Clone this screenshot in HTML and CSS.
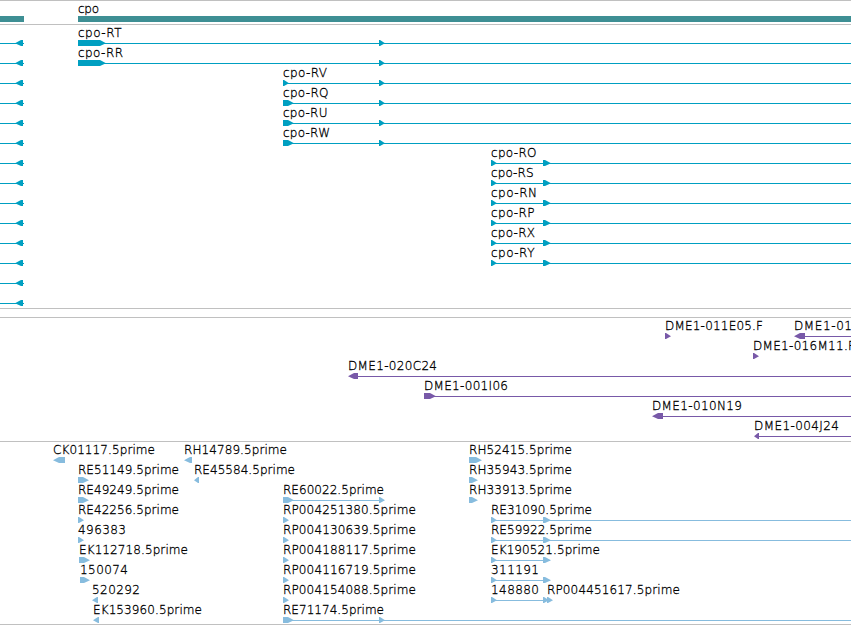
FILE: index.html
```
<!DOCTYPE html>
<html lang="en">
<head>
    <meta charset="UTF-8">
    <meta name="viewport" content="width=device-width, initial-scale=1.0">
    <title>cpo - gene tracks</title>
    <link rel="stylesheet" href="styles.css">
</head>
<body>
    <main class="browser">
        <section class="track gene" id="gene"></section>
        <section class="track transcript" id="transcript"></section>
        <section class="track empty"></section>
        <section class="track clone" id="clone"></section>
        <section class="track est" id="est"></section>
    </main>
    <script src="tracks.js"></script>
</body>
</html>
```
FILE: styles.css
```
body {
    margin: 0;
    background-color: #ffffff;
    overflow: hidden;
}

.browser {
    display: flex;
    flex-direction: column;
    width: 851px;
}

.track {
    border-top: 1px solid #c0c0c0;
    padding: 1px 0 2px;
}

.track.empty {
    height: 8px;
    padding: 0;
}

.track.est {
    padding-bottom: 1px;
    border-bottom: 1px solid #c0c0c0;
}

.row {
    display: block;
    width: 851px;
    height: 20px;
    fill: currentColor;
}

.label {
    font-family: "DejaVu Sans Light", "DejaVu Sans", sans-serif;
    font-weight: 200;
    font-size: 12px;
    fill: #000000;
    stroke: #000000;
    stroke-width: 0.3px;
}

.gene {
    color: #3e8f94;
}

.transcript {
    color: #009fc1;
}

.clone {
    color: #7859a8;
}

.est {
    color: #87bcde;
}
```
FILE: tracks.js
```
const END = 851;

// labels: [x, text, width]
// lines:  [from, to]
// exons:  [from, to, direction], direction is 1, -1 or 0 for a plain bar
const left = { lines: [[0, 24]], exons: [[15, 23, -1]] };

function transcript(x, name, width, exons) {
    return {
        labels: [[x, name, width]],
        lines: [...left.lines, [x, END]],
        exons: [...left.exons, ...exons]
    };
}

function est(x, name, width, from, to, dir) {
    return { labels: [[x, name, width]], lines: [], exons: [[from, to, dir]] };
}

function merge(...rows) {
    return {
        labels: rows.flatMap(r => r.labels),
        lines: rows.flatMap(r => r.lines),
        exons: rows.flatMap(r => r.exons)
    };
}

const tracks = {
    gene: [
        { labels: [[78, 'cpo', 21]], lines: [], exons: [[0, 24, 0], [78, END, 0]] }
    ],
    transcript: [
        transcript(78, 'cpo-RT', 43.5, [[78, 106, 1], [379, 385, 1]]),
        transcript(78, 'cpo-RR', 45, [[78, 106, 1], [379, 385, 1]]),
        transcript(283, 'cpo-RV', 44, [[283, 289, 1], [379, 385, 1]]),
        transcript(283, 'cpo-RQ', 45.5, [[283, 294, 1], [379, 385, 1]]),
        transcript(283, 'cpo-RU', 44.5, [[283, 294, 1], [379, 385, 1]]),
        transcript(283, 'cpo-RW', 47, [[283, 294, 1], [379, 385, 1]]),
        transcript(491, 'cpo-RO', 45.5, [[491, 497, 1], [543, 551, 1]]),
        transcript(491, 'cpo-RS', 42.5, [[491, 497, 1], [543, 551, 1]]),
        transcript(491, 'cpo-RN', 46, [[491, 497, 1], [543, 551, 1]]),
        transcript(491, 'cpo-RP', 43.5, [[491, 497, 1], [543, 551, 1]]),
        transcript(491, 'cpo-RX', 44, [[491, 497, 1], [543, 551, 1]]),
        transcript(491, 'cpo-RY', 43.5, [[491, 497, 1], [543, 551, 1]]),
        { labels: [], ...left },
        { labels: [], ...left }
    ],
    clone: [
        {
            labels: [[665, 'DME1-011E05.F', 98], [794, 'DME1-01', 58]],
            lines: [[800, END]],
            exons: [[665, 671, 1], [794, 805, -1]]
        },
        { labels: [[753, 'DME1-016M11.F', 102]], lines: [], exons: [[753, 759, 1]] },
        { labels: [[348, 'DME1-020C24', 89]], lines: [[350, END]], exons: [[348, 358, -1]] },
        { labels: [[424, 'DME1-001I06', 84]], lines: [[424, END]], exons: [[424, 436, 1]] },
        { labels: [[652, 'DME1-010N19', 90]], lines: [[655, END]], exons: [[652, 663, -1]] },
        { labels: [[754, 'DME1-004J24', 85]], lines: [[756, END]], exons: [[754, 759, -1]] }
    ],
    est: [
        merge(
            est(53, 'CK01117.5prime', 102, 53, 65, -1),
            est(184, 'RH14789.5prime', 103, 184, 192, -1),
            est(469, 'RH52415.5prime', 103, 469, 482, 1)
        ),
        merge(
            est(78, 'RE51149.5prime', 101, 78, 89, 1),
            est(194, 'RE45584.5prime', 101, 194, 199, -1),
            est(469, 'RH35943.5prime', 103, 469, 478, 1)
        ),
        merge(
            est(78, 'RE49249.5prime', 101, 78, 89, 1),
            {
                labels: [[283, 'RE60022.5prime', 101]],
                lines: [[283, 384]],
                exons: [[283, 294, 1], [379, 385, 1]]
            },
            est(469, 'RH33913.5prime', 103, 469, 478, 1)
        ),
        merge(
            est(78, 'RE42256.5prime', 101, 78, 84, 1),
            est(283, 'RP004251380.5prime', 133, 283, 289, 1),
            {
                labels: [[491, 'RE31090.5prime', 101]],
                lines: [[491, END]],
                exons: [[491, 497, 1], [543, 551, 1]]
            }
        ),
        merge(
            est(78, '496383', 48, 78, 84, 1),
            est(283, 'RP004130639.5prime', 133, 283, 289, 1),
            {
                labels: [[491, 'RE59922.5prime', 101]],
                lines: [[491, END]],
                exons: [[491, 497, 1], [543, 551, 1]]
            }
        ),
        merge(
            est(79, 'EK112718.5prime', 109, 79, 90, 1),
            est(283, 'RP004188117.5prime', 133, 283, 289, 1),
            {
                labels: [[491, 'EK190521.5prime', 109]],
                lines: [[491, 550]],
                exons: [[491, 497, 1], [543, 551, 1]]
            }
        ),
        merge(
            est(80, '150074', 48, 80, 90, 1),
            est(283, 'RP004116719.5prime', 133, 283, 289, 1),
            {
                labels: [[491, '311191', 48]],
                lines: [[491, 550]],
                exons: [[491, 497, 1], [543, 551, 1]]
            }
        ),
        merge(
            est(92, '520292', 48, 92, 98, -1),
            est(283, 'RP004154088.5prime', 133, 283, 289, 1),
            {
                labels: [[491, '148880', 48]],
                lines: [[491, 550]],
                exons: [[491, 497, 1], [543, 549, 1]]
            },
            est(547, 'RP004451617.5prime', 133, 547, 553, 1)
        ),
        merge(
            est(93, 'EK153960.5prime', 109, 93, 99, -1),
            {
                labels: [[283, 'RE71174.5prime', 101]],
                lines: [[283, END]],
                exons: [[283, 294, 1], [379, 385, 1]]
            }
        )
    ]
};

function exonPath([from, to, dir]) {
    if (dir === 0) {
        return `M${from} 14H${to}V20H${from}Z`;
    }
    const head = Math.min(to - from, 7);
    if (dir > 0) {
        return `M${from} 14H${to - head + 1}L${to} 17.3L${to - head + 1} 20H${from}Z`;
    }
    return `M${to} 14H${from + head - 1}L${from} 17.3L${from + head - 1} 20H${to}Z`;
}

function drawRow(row) {
    const lines = row.lines.map(([a, b]) => `<rect x="${a}" y="17" width="${b - a}" height="1"/>`);
    const exons = row.exons.map(e => `<path d="${exonPath(e)}"/>`);
    const labels = row.labels.map(([x, text, width]) =>
        `<text class="label" x="${x}" y="11" textLength="${width}">${text}</text>`);
    return `<svg class="row" viewBox="0 0 851 20">${lines.join('')}${exons.join('')}${labels.join('')}</svg>`;
}

for (const id in tracks) {
    document.getElementById(id).innerHTML = tracks[id].map(drawRow).join('');
}
```
